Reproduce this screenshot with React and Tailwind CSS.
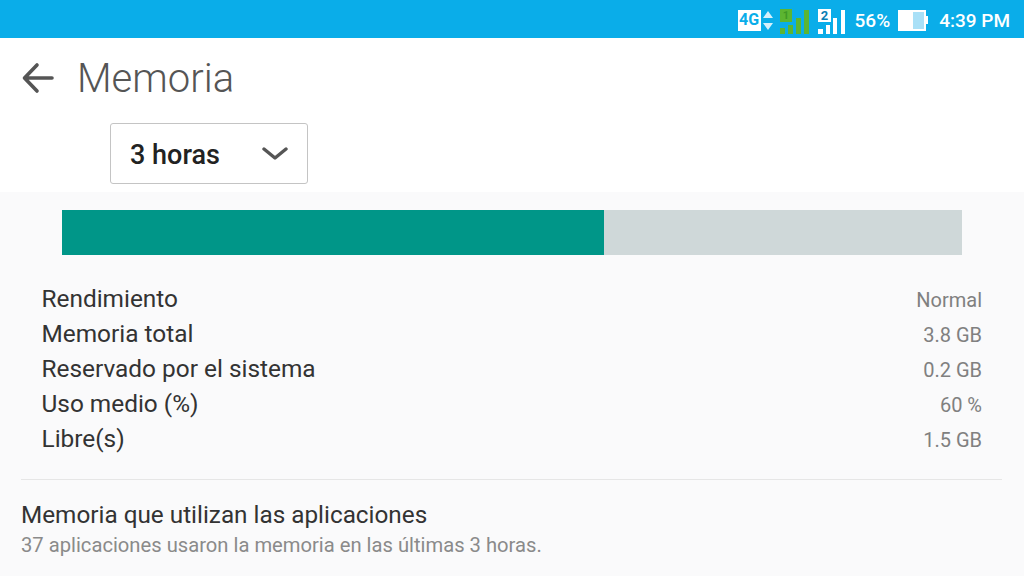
const rows = [
  ["Rendimiento", "Normal"],
  ["Memoria total", "3.8 GB"],
  ["Reservado por el sistema", "0.2 GB"],
  ["Uso medio (%)", "60 %"],
  ["Libre(s)", "1.5 GB"],
];

function Status() {
  return (
    <div className="h-[38px] pt-[2px] bg-[#0aade9] flex items-center justify-end pr-[14px] text-white font-medium text-[19px] leading-none">
      <div className="w-[23px] h-[21px] bg-white text-[#0aade9] text-[16px] font-bold flex items-center justify-center mr-[2px]">4G</div>
      <svg width="10" height="22" viewBox="0 0 10 22" className="mr-[7px]"><path d="M5 2 L10 9 H0Z M0 14 H10 L5 21Z" fill="#d5f0fb" /></svg>
      <svg width="30" height="28" viewBox="0 0 30 28" className="mr-[8px]">
        <rect x="0" y="3" width="12" height="13" fill="#5cb531" />
        <text x="6" y="13" textAnchor="middle" fontSize="11" fontWeight="700" fill="#3f9a25">1</text>
        <rect x="0" y="22" width="5" height="6" fill="#5cb531" />
        <rect x="8" y="19" width="5" height="9" fill="#5cb531" />
        <rect x="16" y="12" width="5" height="16" fill="#5cb531" />
        <rect x="24" y="4" width="5" height="24" fill="#5cb531" />
      </svg>
      <svg width="28" height="28" viewBox="0 0 28 28" className="mr-[9px]">
        <rect x="0" y="3" width="13" height="13" fill="white" />
        <text x="6.5" y="14" textAnchor="middle" fontSize="13" fontWeight="700" fill="#0a7fb5">2</text>
        <rect x="0" y="23" width="5" height="5" fill="white" />
        <rect x="8" y="19" width="4" height="9" fill="white" />
        <rect x="15" y="12" width="4" height="16" fill="white" />
        <rect x="23" y="4" width="4" height="24" fill="white" />
      </svg>
      <span className="mr-[8px]">56%</span>
      <div className="w-[30px] h-[21px] flex mr-[11px]">
        <div className="w-[15px] bg-white" />
        <div className="w-[13px] bg-[#a9e0f7] border-y-2 border-r-2 border-white" />
        <div className="w-[2px] h-[8px] bg-white self-center" />
      </div>
      <span>4:39 PM</span>
    </div>
  );
}

export default function App() {
  return (
    <div className="w-[1024px] h-[576px] overflow-hidden bg-white font-['Roboto',sans-serif] flex flex-col">
      <Status />
      <div className="h-[80px] flex items-center pl-[22px]">
        <svg width="32" height="32" viewBox="0 0 32 32" fill="none" stroke="#555" strokeWidth="3.6" strokeLinecap="round" strokeLinejoin="round">
          <path d="M30 16H3M15 3L2.5 16L15 29" />
        </svg>
        <span className="ml-[23px] pt-[2px] text-[40px] font-light text-[#555] leading-none">Memoria</span>
      </div>
      <div className="h-[74px] pl-[110px] pt-[5px]">
        <div className="w-[198px] h-[61px] border border-[#c4c4c4] rounded-[3px] flex items-center justify-between pl-[19px] pr-[19px]">
          <span className="text-[27px] font-medium text-[#222] pt-[4px]">3 horas</span>
          <svg width="26" height="14" viewBox="0 0 26 14" fill="none" stroke="#555" strokeWidth="3.4" strokeLinecap="round" strokeLinejoin="round"><path d="M2 2L13 11L24 2" /></svg>
        </div>
      </div>
      <div className="flex-1 bg-[#fafafb] flex flex-col">
        <div className="mt-[18px] ml-[62px] w-[900px] h-[45px] bg-[#cfd8d9] flex">
          <div className="w-[542px] bg-[#009688]" />
        </div>
        <div className="mt-[27px] pl-[41.5px] pr-[42px]">
          {rows.map(([a, b]) => (
            <div key={a} className="h-[35px] flex items-center justify-between">
              <span className="text-[24.4px] text-[#333]">{a}</span>
              <span className="text-[20px] text-[#808080]">{b}</span>
            </div>
          ))}
        </div>
        <div className="mt-[22px] ml-[21px] mr-[22px] border-t border-[#e6e6e6] pt-[20px]">
          <div className="text-[24.3px] leading-[30px] text-[#333]">Memoria que utilizan las aplicaciones</div>
          <div className="text-[20.2px] leading-[30px] text-[#8a8a8a]">37 aplicaciones usaron la memoria en las últimas 3 horas.</div>
        </div>
      </div>
    </div>
  );
}
